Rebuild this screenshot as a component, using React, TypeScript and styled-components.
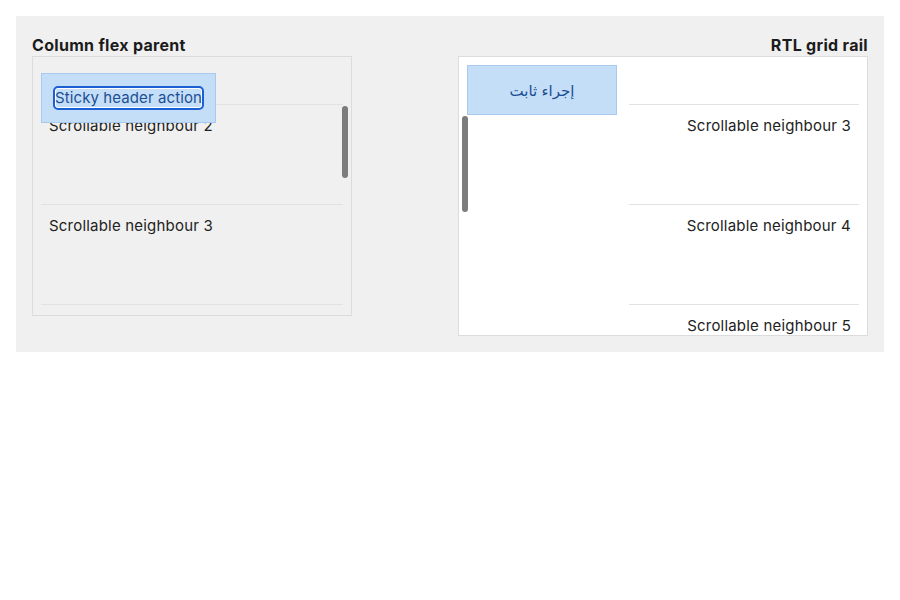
import React, {useLayoutEffect, useRef} from 'react';
import styled, {createGlobalStyle} from 'styled-components';

const GlobalStyle = createGlobalStyle`
  body {
    margin: 0;
    background: #ffffff;
    font-family: Inter, "Noto Sans", "DejaVu Sans", sans-serif;
    color: #1f1f1f;
  }
`;

const Stage = styled.div`
  margin: 16px;
  padding: 16px;
  background: #f0f0f0;
  display: grid;
  grid-template-columns: 1fr 1fr;
  gap: 16px;
`;

const Column = styled.section<{ $rtl?: boolean }>`
  display: flex;
  flex-direction: column;
  direction: ${props => props.$rtl ? 'rtl' : 'ltr'};
`;

const Heading = styled.h3`
  margin: 0;
  padding-top: 2px;
  font-size: 16px;
  line-height: 22px;
  font-weight: 700;
  letter-spacing: 0.3px;
  color: #1b1b1b;
`;

// wrapper so the overlay scroll thumb can sit on top of the scroller
const Frame = styled.div<{ $width?: number }>`
  position: relative;
  width: ${props => props.$width ? `${props.$width}px` : 'auto'};
`;

const Scroller = styled.div<{ $height: number; $bg: string }>`
  box-sizing: border-box;
  height: ${props => props.$height}px;
  padding: 8px;
  border: 1px solid #dcdcdc;
  background: ${props => props.$bg};
  overflow-y: auto;
  scrollbar-width: none;

  &::-webkit-scrollbar {
    display: none;
  }
`;

const FlexScroller = styled(Scroller)`
  display: flex;
  flex-direction: column;
`;

const GridScroller = styled(Scroller)`
  display: grid;
  grid-template-columns: 1fr 150px;
  align-items: start;
  column-gap: 12px;
`;

const Thumb = styled.div<{ $left: number; $top: number; $length: number }>`
  position: absolute;
  left: ${props => props.$left}px;
  top: ${props => props.$top}px;
  width: 6px;
  height: ${props => props.$length}px;
  border-radius: 3px;
  background: #7c7c7c;
  z-index: 2;
`;

const StickyHeader = styled.div`
  position: sticky;
  top: 8px;
  z-index: 1;
  align-self: flex-start;
  flex-shrink: 0;
  margin-bottom: 50px;
  padding: 14px 13px;
  background: #c5def8;
  border: 1px solid #a9c9ef;
`;

const HeaderButton = styled.button`
  display: block;
  margin: 0;
  padding: 0;
  border: none;
  border-radius: 3px;
  background: transparent;
  font: inherit;
  font-size: 15px;
  line-height: 20px;
  letter-spacing: 0.1px;
  color: #1b4f94;
  outline: 2px solid #1c5fd4;
  box-shadow: inset 0 0 0 1px #ffffff;
`;

const RailAction = styled.div`
  position: sticky;
  top: 0;
  box-sizing: border-box;
  height: 50px;
  display: flex;
  align-items: center;
  justify-content: center;
  background: #c5def8;
  border: 1px solid #a9c9ef;
  font-size: 15px;
  color: #1b4f94;
`;

const List = styled.div`
  display: flex;
  flex-direction: column;
`;

const Item = styled.div`
  box-sizing: border-box;
  flex-shrink: 0;
  height: 100px;
  padding: 12px 8px;
  border-bottom: 1px solid #e2e2e2;
  font-size: 15px;
  line-height: 18px;
  letter-spacing: 0.2px;
  color: #222222;
`;

const items = [1, 2, 3, 4, 5, 6, 7, 8];

function App() {
  const leftRef = useRef<HTMLDivElement>(null);
  const rightRef = useRef<HTMLDivElement>(null);

  useLayoutEffect(() => {
    if (leftRef.current) leftRef.current.scrollTop = 160;
    if (rightRef.current) rightRef.current.scrollTop = 160;
  }, []);

  return (
    <>
      <GlobalStyle />
      <Stage>
        <Column>
          <Heading>Column flex parent</Heading>
          <Frame $width={320}>
            <FlexScroller ref={leftRef} $height={260} $bg="transparent">
              <StickyHeader>
                <HeaderButton type="button">Sticky header action</HeaderButton>
              </StickyHeader>
              {items.map(n => (
                <Item key={n}>Scrollable neighbour {n}</Item>
              ))}
            </FlexScroller>
            <Thumb $left={310} $top={50} $length={72} />
          </Frame>
        </Column>
        <Column $rtl>
          <Heading>RTL grid rail</Heading>
          <Frame>
            <GridScroller ref={rightRef} $height={280} $bg="#ffffff">
              <List>
                {items.map(n => (
                  <Item key={n}>Scrollable neighbour {n}</Item>
                ))}
              </List>
              <RailAction>إجراء ثابت</RailAction>
            </GridScroller>
            <Thumb $left={4} $top={60} $length={96} />
          </Frame>
        </Column>
      </Stage>
    </>
  );
}

export default App;
